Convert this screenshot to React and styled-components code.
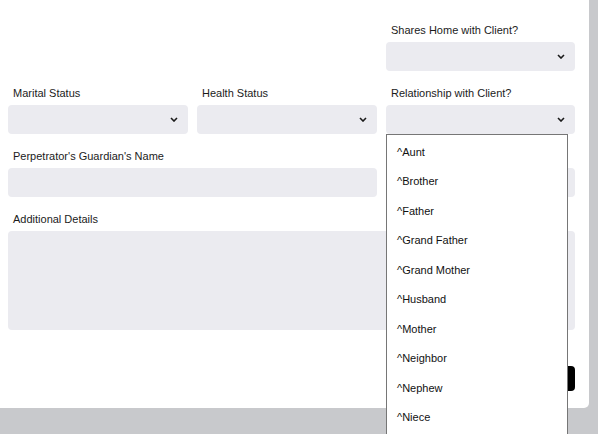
import styled, { createGlobalStyle } from 'styled-components';

const GlobalStyle = createGlobalStyle`
  body {
    margin: 0;
    background: #c8c9cc;
    font-family: 'Liberation Sans', Arial, sans-serif;
  }
`;

const Page = styled.div`
  height: 434px;
  overflow: hidden;
  padding-right: 9px;
  box-sizing: border-box;
`;

const Card = styled.div`
  background: #ffffff;
  border-radius: 0 0 5px 0;
  padding: 24px 14px 17px 8px;
`;

const Grid = styled.div`
  display: grid;
  grid-template-columns: 180px 180px 189px;
  column-gap: 9px;
  row-gap: 16px;
`;

const Field = styled.div`
  position: relative;
  grid-column: ${(p) => p.span || 'auto'};
  display: flex;
  flex-direction: column;
`;

const Label = styled.label`
  font-size: 11px;
  line-height: 12px;
  color: #1b1b1b;
  padding-left: 5px;
  margin-bottom: 6px;
`;

const SelectBox = styled.div`
  height: 29px;
  background: #ebebf0;
  border-radius: 4px;
  display: flex;
  align-items: center;
  justify-content: flex-end;
  padding-right: 10px;
`;

const Input = styled.div`
  height: 29px;
  background: #ebebf0;
  border-radius: 4px;
`;

const TextArea = styled.div`
  height: 99px;
  background: #ebebf0;
  border-radius: 4px;
`;

const Footer = styled.div`
  display: flex;
  justify-content: flex-end;
  margin-top: 36px;
`;

const SaveButton = styled.button`
  height: 25px;
  width: 80px;
  border: none;
  border-radius: 4px;
  background: #000;
  color: #fff;
  font-family: inherit;
  font-size: 11px;
`;

const Menu = styled.ul`
  position: absolute;
  top: 100%;
  left: 0;
  width: 182px;
  height: 330px;
  box-sizing: border-box;
  margin: 0;
  padding: 2px 0 0;
  list-style: none;
  background: #fff;
  border: 1px solid #767676;
  z-index: 5;
`;

const MenuItem = styled.li`
  height: 29.5px;
  display: flex;
  align-items: center;
  padding-left: 10px;
  font-size: 11px;
  color: #111;
`;

const Chevron = () => (
  <svg width="8" height="5" viewBox="0 0 8 5">
    <polyline
      points="1,1 4,4 7,1"
      fill="none"
      stroke="#1a1a1a"
      strokeWidth="1.6"
    />
  </svg>
);

const Select = () => (
  <SelectBox>
    <Chevron />
  </SelectBox>
);

const relations = [
  'Aunt',
  'Brother',
  'Father',
  'Grand Father',
  'Grand Mother',
  'Husband',
  'Mother',
  'Neighbor',
  'Nephew',
  'Niece',
];

const App = () => {
  return (
    <Page>
      <GlobalStyle />
      <Card>
        <Grid>
          <Field span="3">
            <Label>Shares Home with Client?</Label>
            <Select />
          </Field>
          <Field>
            <Label>Marital Status</Label>
            <Select />
          </Field>
          <Field>
            <Label>Health Status</Label>
            <Select />
          </Field>
          <Field>
            <Label>Relationship with Client?</Label>
            <Select />
            <Menu>
              {relations.map((r) => (
                <MenuItem key={r}>^{r}</MenuItem>
              ))}
            </Menu>
          </Field>
          <Field span="span 2">
            <Label>Perpetrator's Guardian's Name</Label>
            <Input />
          </Field>
          <Field>
            <Label>&nbsp;</Label>
            <Input />
          </Field>
          <Field span="span 3">
            <Label>Additional Details</Label>
            <TextArea />
          </Field>
        </Grid>
        <Footer>
          <SaveButton>Save</SaveButton>
        </Footer>
      </Card>
    </Page>
  );
};

export default App;
